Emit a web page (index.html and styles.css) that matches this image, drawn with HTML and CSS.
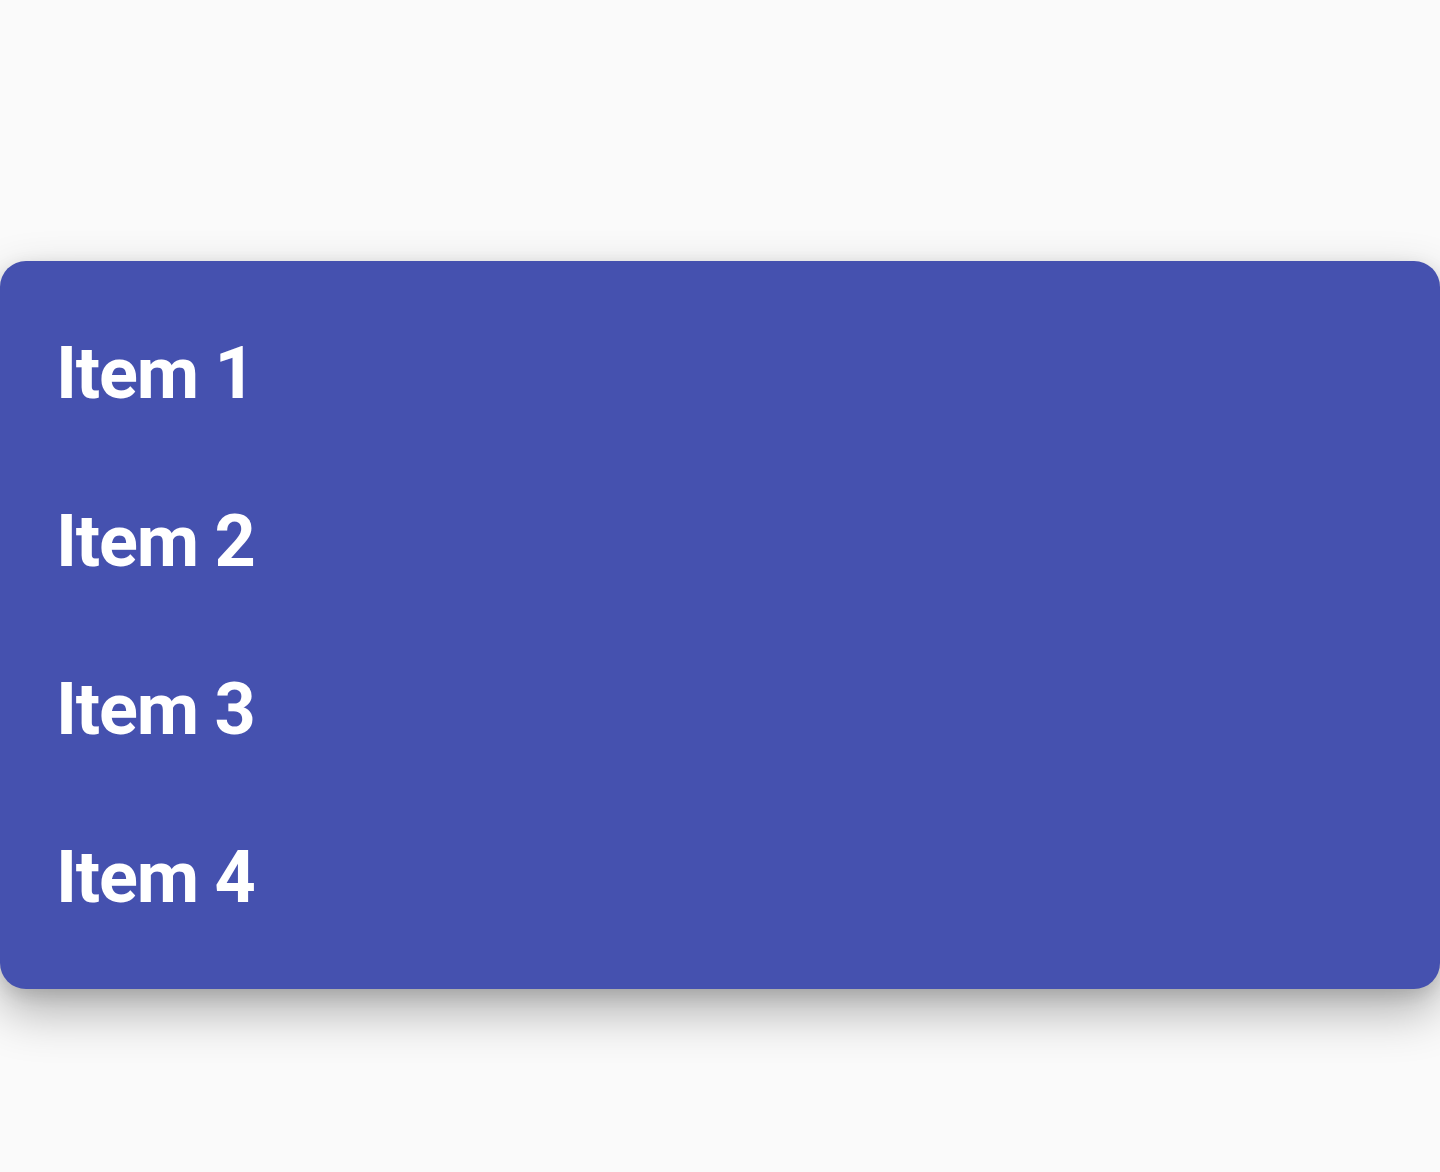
FILE: index.html
```html
<!DOCTYPE html>
<html>
<head>
<meta charset="utf-8">
<link rel="stylesheet" href="styles.css">
</head>
<body>
<div class="page">
  <ul class="menu">
    <li class="item">Item 1</li>
    <li class="item">Item 2</li>
    <li class="item">Item 3</li>
    <li class="item">Item 4</li>
  </ul>
</div>
</body>
</html>
```

FILE: styles.css
```css
html, body {
  margin: 0;
  padding: 0;
  background: #fafafa;
}
.page {
  width: 1440px;
  height: 1172px;
  padding-top: 261px;
  box-sizing: border-box;
}
.menu {
  list-style: none;
  margin: 0;
  padding: 28px 0;
  background: #4551af;
  border-radius: 26px;
  box-shadow: 0 22px 50px rgba(0, 0, 0, 0.3), 0 6px 18px rgba(0, 0, 0, 0.12);
}
.item {
  height: 168px;
  display: flex;
  align-items: center;
  padding-left: 56px;
  font-family: Roboto, "Liberation Sans", sans-serif;
  font-weight: 700;
  font-size: 72px;
  letter-spacing: -1.2px;
  color: #ffffff;
}
```
